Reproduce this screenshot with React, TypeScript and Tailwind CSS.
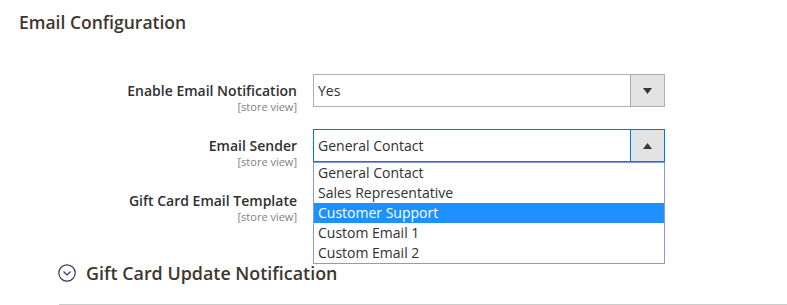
import React from "react";

const font = { fontFamily: '"Open Sans", "Noto Sans", sans-serif' };

function Caret({ up }: { up?: boolean }) {
  return (
    <svg width="9" height="6" viewBox="0 0 9 6" className="block">
      {up ? (
        <polygon points="4.5,0 9,6 0,6" fill="#41362f" />
      ) : (
        <polygon points="0,0 9,0 4.5,6" fill="#41362f" />
      )}
    </svg>
  );
}

function FieldLabel({ text }: { text: string }) {
  return (
    <div className="w-[297px] shrink-0 text-right pt-[7px]">
      <div className="text-[14px] leading-[20px] font-semibold text-[#303030]">{text}</div>
      <div className="text-[11px] leading-[11px] text-[#808080]">[store view]</div>
    </div>
  );
}

function SelectBox({ value, open }: { value?: string; open?: boolean }) {
  const border = open ? "border-[#007bdb]" : "border-[#adadad]";
  return (
    <div className={`flex h-[33px] w-[352px] border ${border} bg-white`}>
      <div className="flex-1 flex items-center pl-[4px] text-[14px] text-[#303030]">{value}</div>
      <div className={`w-[34px] flex items-center justify-center bg-[#e3e3e3] border-l ${border}`}>
        <Caret up={open} />
      </div>
    </div>
  );
}

const options = ["General Contact", "Sales Representative", "Customer Support", "Custom Email 1", "Custom Email 2"];

export default function App() {
  return (
    <div className="w-[787px] h-[305px] overflow-hidden bg-white relative" style={font}>
      <h2 className="pl-[19px] pt-[10px] text-[17.5px] leading-[24px] font-semibold text-[#41362f]">
        Email Configuration
      </h2>

      <div className="mt-[40px] flex flex-col gap-[22px]">
        <div className="flex gap-[16px] h-[33px]">
          <FieldLabel text="Enable Email Notification" />
          <SelectBox value="Yes" />
        </div>

        <div className="flex gap-[16px] h-[33px] relative z-10">
          <FieldLabel text="Email Sender" />
          <div className="relative">
            <SelectBox value="General Contact" open />
            <ul className="absolute left-0 top-[33px] w-[352px] border border-[#7f9edb] bg-white">
              {options.map((o) => (
                <li
                  key={o}
                  className={`h-[20px] leading-[20px] pl-[4px] text-[14px] ${
                    o === "Customer Support" ? "bg-[#1e90ff] text-white" : "text-[#303030]"
                  }`}
                >
                  {o}
                </li>
              ))}
            </ul>
          </div>
        </div>

        {/* template select sits under the open list */}
        <div className="flex gap-[16px] h-[33px]">
          <FieldLabel text="Gift Card Email Template" />
          <SelectBox />
        </div>
      </div>

      <div className="ml-[58px] mt-[44px] flex items-center gap-[10px]">
        <svg width="18" height="18" viewBox="0 0 18 18">
          <circle cx="9" cy="9" r="8.2" fill="none" stroke="#303a5a" strokeWidth="1.2" />
          <polyline points="5.5,7.5 9,11 12.5,7.5" fill="none" stroke="#303a5a" strokeWidth="1.2" />
        </svg>
        <span className="text-[17.9px] leading-[24px] font-semibold text-[#41362f]">
          Gift Card Update Notification
        </span>
      </div>
      <div className="ml-[59px] mt-[19px] border-t border-[#cccccc]" />
    </div>
  );
}
